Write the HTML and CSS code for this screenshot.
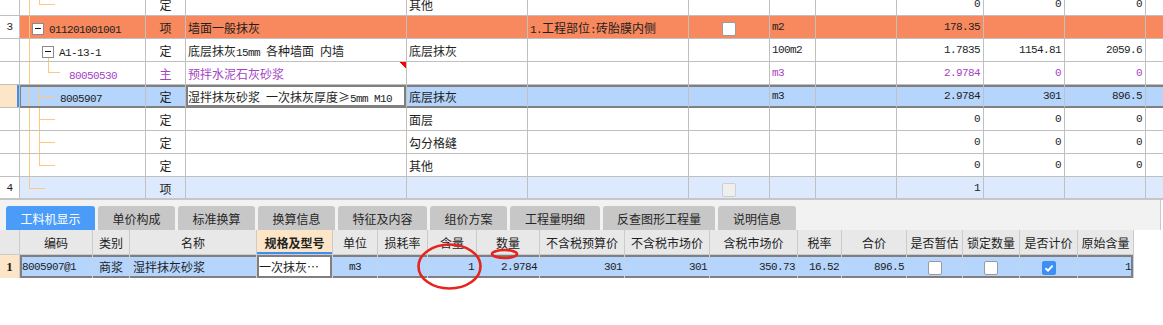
FILE: index.html
```html
<!DOCTYPE html>
<html lang="zh-CN">
<head>
    <meta charset="UTF-8">
    <title>工料机显示</title>
    <link rel="stylesheet" href="styles.css">
</head>
<body>

    <div class="upper">
        <table class="grid">
            <colgroup>
                <col style="width:20px"><col style="width:126px"><col style="width:40px"><col style="width:221px">
                <col style="width:121px"><col style="width:161px"><col style="width:81px"><col style="width:46px">
                <col style="width:81px"><col style="width:87px"><col style="width:81px"><col style="width:81px">
                <col style="width:100px">
            </colgroup>
            <tr>
                <td class="c"></td><td class="tree r0"></td><td class="c">定</td><td></td><td>其他</td><td></td><td></td><td></td><td></td>
                <td class="r m">0</td><td class="r m">0</td><td class="r m">0</td><td></td>
            </tr>
            <tr class="hot">
                <td class="c m rn">3</td>
                <td class="tree r1 l1"><b class="box"></b><span class="m">011201001001</span></td>
                <td class="c">项</td><td>墙面一般抹灰</td><td></td>
                <td><span class="m">1.</span>工程部位<span class="m">:</span>砖胎膜内侧</td>
                <td class="c"><i class="cb"></i></td><td class="m">m2</td><td></td>
                <td class="r m">178.35</td><td></td><td></td><td></td>
            </tr>
            <tr>
                <td class="c"></td>
                <td class="tree r2 l2"><b class="box"></b><span class="m">A1-13-1</span></td>
                <td class="c">定</td><td>底层抹灰<span class="m">15mm </span>各种墙面<span class="m"> </span>内墙</td><td>底层抹灰</td><td></td><td></td>
                <td class="m">100m2</td><td></td>
                <td class="r m">1.7835</td><td class="r m">1154.81</td><td class="r m">2059.6</td><td></td>
            </tr>
            <tr class="pur">
                <td class="c"></td>
                <td class="tree r3 l3"><span class="m">80050530</span></td>
                <td class="c">主</td><td class="flag">预拌水泥石灰砂浆</td><td></td><td></td><td></td>
                <td class="m">m3</td><td></td>
                <td class="r m">2.9784</td><td class="r m">0</td><td class="r m">0</td><td></td>
            </tr>
            <tr class="sel">
                <td class="c mark"></td>
                <td class="tree r4 l4"><span class="m">8005907</span></td>
                <td class="c">定</td>
                <td class="edit">湿拌抹灰砂浆<span class="m"> </span>一次抹灰厚度≥<span class="m">5mm M10</span></td>
                <td>底层抹灰</td><td></td><td></td>
                <td class="m">m3</td><td></td>
                <td class="r m">2.9784</td><td class="r m">301</td><td class="r m">896.5</td><td></td>
            </tr>
            <tr>
                <td class="c"></td><td class="tree r4"></td><td class="c">定</td><td></td><td>面层</td><td></td><td></td><td></td><td></td>
                <td class="r m">0</td><td class="r m">0</td><td class="r m">0</td><td></td>
            </tr>
            <tr>
                <td class="c"></td><td class="tree r4"></td><td class="c">定</td><td></td><td>勾分格缝</td><td></td><td></td><td></td><td></td>
                <td class="r m">0</td><td class="r m">0</td><td class="r m">0</td><td></td>
            </tr>
            <tr>
                <td class="c"></td><td class="tree r7"></td><td class="c">定</td><td></td><td>其他</td><td></td><td></td><td></td><td></td>
                <td class="r m">0</td><td class="r m">0</td><td class="r m">0</td><td></td>
            </tr>
            <tr class="soft">
                <td class="c m rn">4</td><td class="tree r8"></td><td class="c">项</td><td></td><td></td><td></td>
                <td class="c"><i class="cb off"></i></td><td></td><td></td>
                <td class="r m">1</td><td></td><td></td><td></td>
            </tr>
        </table>
    </div>

    <div class="tabs">
        <div class="tab on" style="width:89px">工料机显示</div>
        <div class="tab" style="width:77px">单价构成</div>
        <div class="tab" style="width:77px">标准换算</div>
        <div class="tab" style="width:77px">换算信息</div>
        <div class="tab" style="width:89px">特征及内容</div>
        <div class="tab" style="width:77px">组价方案</div>
        <div class="tab" style="width:90px">工程量明细</div>
        <div class="tab" style="width:112px">反查图形工程量</div>
        <div class="tab" style="width:78px">说明信息</div>
    </div>

    <table class="sub">
        <colgroup>
            <col style="width:20px"><col style="width:73px"><col style="width:37px"><col style="width:127px">
            <col style="width:76px"><col style="width:45px"><col style="width:50px"><col style="width:49px">
            <col style="width:63px"><col style="width:85px"><col style="width:85px"><col style="width:88px">
            <col style="width:44px"><col style="width:65px"><col style="width:56px"><col style="width:57px">
            <col style="width:58px"><col style="width:56px">
        </colgroup>
        <tr>
            <th></th><th>编码</th><th>类别</th><th>名称</th><th class="focus">规格及型号</th><th>单位</th><th>损耗率</th>
            <th>含量</th><th>数量</th><th>不含税预算价</th><th>不含税市场价</th><th>含税市场价</th><th>税率</th>
            <th>合价</th><th>是否暂估</th><th>锁定数量</th><th>是否计价</th><th>原始含量</th>
        </tr>
        <tr class="sel">
            <td class="no">1</td>
            <td class="m first">8005907@1</td>
            <td class="c">商浆</td>
            <td class="name">湿拌抹灰砂浆</td>
            <td class="edit">一次抹灰…</td>
            <td class="c m">m3</td>
            <td></td>
            <td class="r m">1</td>
            <td class="r m">2.9784</td>
            <td class="r m">301</td>
            <td class="r m">301</td>
            <td class="r m">350.73</td>
            <td class="r m">16.52</td>
            <td class="r m">896.5</td>
            <td class="c"><i class="cb"></i></td>
            <td class="c"><i class="cb"></i></td>
            <td class="c"><i class="cb yes"><svg width="12" height="12" viewBox="0 0 12 12"><path d="M2.5 6.2 L5 8.6 L9.6 3.6" fill="none" stroke="#fff" stroke-width="2"/></svg></i></td>
            <td class="r m last">1</td>
        </tr>
    </table>

    <svg class="marks" width="1163" height="325" viewBox="0 0 1163 325">
        <ellipse cx="449.5" cy="266.5" rx="31" ry="22" fill="none" stroke="#e5241d" stroke-width="2.6"/>
        <ellipse cx="504.5" cy="254" rx="12.5" ry="4" fill="none" stroke="#e5241d" stroke-width="2.6"/>
    </svg>

</body>
</html>
```

FILE: styles.css
```css
* {
    box-sizing: border-box;
}

body {
    margin: 0;
    position: relative;
    width: 1163px;
    height: 325px;
    overflow: hidden;
    background-color: #fff;
    font: 12px "Noto Sans CJK SC", sans-serif;
    color: #1e1e1e;
}

.m {
    font-family: "Liberation Mono", "Noto Sans CJK SC", monospace;
    font-size: 11px;
    letter-spacing: -0.6px;
}

.c { text-align: center; }
.r { text-align: right; }

/* upper grid */
.upper {
    height: 200px;
    overflow: hidden;
    border-bottom: 2px solid #c6c6c6;
}

.grid {
    border-collapse: separate;
    border-spacing: 0;
    table-layout: fixed;
    width: 1246px;
    margin-top: -7px;
}

.grid tr {
    height: 23px;
}

.grid td {
    padding: 0 3px 0 2px;
    border-right: 1px solid #c0c0c0;
    border-bottom: 1px solid #c0c0c0;
    white-space: nowrap;
    overflow: hidden;
    vertical-align: middle;
}

.grid td.r {
    padding-right: 3px;
}

.grid td.c {
    padding: 0;
}

.hot td { background-color: #f8885e; }
.hot td.rn { background-color: #fff; }

.pur td { color: #a443c2; }

.sel td { background-color: #b5d5fd; }

.soft td { background-color: #dde9fc; }
.soft td.rn { background-color: #fff; }

.grid .sel td {
    box-shadow: inset 0 2px #7f7f7f, inset 0 -1px #7f7f7f;
    border-bottom-color: #7f7f7f;
}

.grid .sel td.mark {
    background-color: #fde5c8;
    box-shadow: inset -2px 0 #3d8ef2;
    border-bottom-color: #c0c0c0;
}

.grid .sel td.tree {
    box-shadow: inset 0 2px #7f7f7f, inset 0 -1px #7f7f7f, inset 1px 0 #7f7f7f;
}

.grid .sel td.edit,
.sub .sel td.edit {
    background-color: #fff;
    box-shadow: inset 0 0 0 2px #7f7f7f;
}

.flag {
    background-image: linear-gradient(to bottom left, #f00 50%, transparent 50%);
    background-position: right top;
    background-size: 7px 6px;
    background-repeat: no-repeat;
}

/* tree guides */
.tree {
    --tl: linear-gradient(#ffc880, #ffc880);
    background-repeat: no-repeat;
}

.l1 { padding-left: 12px !important; }
.l2 { padding-left: 22px !important; }
.l3 { padding-left: 49px !important; }
.l4 { padding-left: 40px !important; }

.r0 {
    background-image: var(--tl), var(--tl), var(--tl);
    background-position: 9px 0, 19px 0, 19px 11px;
    background-size: 1px 100%, 1px 12px, 16px 1px;
}

.r1 {
    background-image: var(--tl);
    background-position: 9px 0;
    background-size: 1px 100%;
}

.r2 {
    background-image: var(--tl), var(--tl);
    background-position: 9px 0, 28px 18px;
    background-size: 1px 100%, 1px 100%;
}

.r3 {
    background-image: var(--tl), var(--tl), var(--tl);
    background-position: 9px 0, 28px 0, 28px 10px;
    background-size: 1px 100%, 1px 11px, 12px 1px;
}

.r4 {
    background-image: var(--tl), var(--tl), var(--tl);
    background-position: 9px 0, 19px 0, 19px 11px;
    background-size: 1px 100%, 1px 100%, 16px 1px;
}

.r7 {
    background-image: var(--tl), var(--tl), var(--tl);
    background-position: 9px 0, 19px 0, 19px 11px;
    background-size: 1px 100%, 1px 12px, 16px 1px;
}

.r8 {
    background-image: var(--tl), var(--tl);
    background-position: 9px 0, 9px 11px;
    background-size: 1px 12px, 16px 1px;
}

.box {
    display: inline-block;
    width: 12px;
    height: 12px;
    margin-right: 5px;
    vertical-align: -2px;
    border: 1px solid #8a8a8a;
    background: #fff linear-gradient(#111, #111) center / 6px 1px no-repeat;
}

.cb {
    display: inline-block;
    width: 14px;
    height: 14px;
    vertical-align: middle;
    border: 1px solid #9a9a9a;
    border-radius: 2px;
    background-color: #fff;
}

.cb.off {
    background-color: #efefef;
    border-color: #cfcfcf;
}

.cb.yes {
    background-color: #3d8ff6;
    border-color: #3d8ff6;
}

.cb svg {
    display: block;
    margin: 0;
}

/* tab strip */
.tabs {
    display: flex;
    gap: 3px;
    width: 1161px;
    height: 30px;
    padding: 6px 0 0 6px;
    background-color: #f2f2f2;
    border-right: 1px solid #c8c8c8;
}

.tab {
    height: 24px;
    display: flex;
    align-items: center;
    justify-content: center;
    background-color: #c7c7c7;
    border-radius: 3px 3px 0 0;
    color: #262626;
    font-size: 12px;
}

.tab.on {
    background-color: #4a9cf8;
    color: #fff;
}

/* lower grid */
.sub {
    border-collapse: separate;
    border-spacing: 0;
    table-layout: fixed;
    width: 1134px;
}

.sub th {
    height: 25px;
    padding: 0;
    font-weight: normal;
    background-color: #e8e8e8;
    border-right: 1px solid #cbcbcb;
    border-bottom: 1px solid #cbcbcb;
    white-space: nowrap;
    overflow: hidden;
    color: #222;
}

.sub th.focus {
    font-weight: bold;
    background-color: #fde6c8;
    box-shadow: inset 0 -2px #3d8ef2;
}

.sub td {
    height: 23px;
    padding: 0 2px;
    white-space: nowrap;
    overflow: hidden;
    border-right: 1px solid #c4d3e6;
}

.sub .sel td {
    box-shadow: inset 0 2px #7f7f7f, inset 0 -2px #7f7f7f;
}

.sub .sel td.first {
    box-shadow: inset 0 2px #7f7f7f, inset 0 -2px #7f7f7f, inset 2px 0 #7f7f7f;
}

.sub .sel td.last {
    box-shadow: inset 0 2px #7f7f7f, inset 0 -2px #7f7f7f, inset -2px 0 #7f7f7f;
}

.sub td.no {
    background-color: #fde5c8;
    box-shadow: none;
    text-align: center;
    font: bold 13px "Liberation Serif", serif;
    border-right: 1px solid #cbcbcb;
}

.sub td.name {
    padding-left: 3px;
}

.marks {
    position: absolute;
    left: 0;
    top: 0;
    pointer-events: none;
}
```
